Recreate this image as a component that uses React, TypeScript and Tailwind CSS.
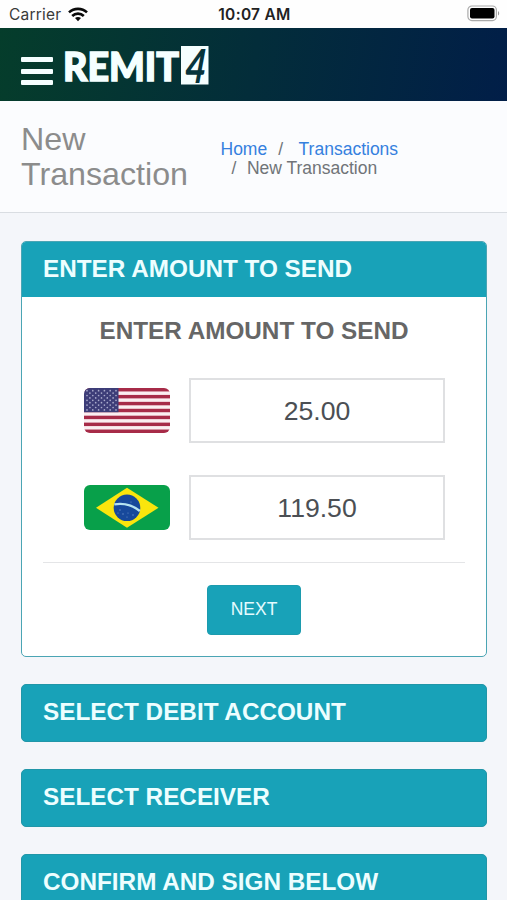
import React from "react";

const headingClass = "text-[24.3px] leading-[30px] font-bold";

function StatusBar() {
  return (
    <div className="grid h-7 shrink-0 grid-cols-3 items-center bg-[#fefefe] pt-px pr-[7px] pl-[9px] font-['Inter',sans-serif] text-[#222]">
      <div className="flex items-center gap-[7px]">
        <span className="text-[15.5px] leading-[20px] tracking-[0.2px] text-[#3a3a3a]">Carrier</span>
        <svg width="20" height="15" viewBox="0 0 20 15" fill="none" stroke="#0a0a0a" strokeWidth="2.6">
          <path d="M1 5.4C6 .7 14 .7 19 5.4" />
          <path d="M4.2 9C7.5 5.8 12.5 5.8 15.8 9" />
          <path d="M10 14.2l-3-3.1c1.7-1.5 4.3-1.5 6 0z" fill="#0a0a0a" stroke="none" />
        </svg>
      </div>
      <div className="text-center text-[15.5px] leading-[20px] font-semibold tracking-[0.3px] whitespace-nowrap">
        10:07 AM
      </div>
      <svg className="mb-[2px] justify-self-end" width="33" height="17" viewBox="0 0 33 17">
        <rect x=".9" y="1" width="28.5" height="14.6" rx="4" fill="none" stroke="#aaa" strokeWidth="1.2" />
        <rect x="3" y="3" width="24.5" height="10.6" rx="2" fill="#000" />
        <path d="M31 6c1.6.8 1.6 3.8 0 4.6z" fill="#999" />
      </svg>
    </div>
  );
}

function Logo() {
  return (
    <svg width="150" height="68" viewBox="0 -12 150 68" role="img" aria-label="Remit4">
      <text
        x="1"
        y="39.3"
        fontFamily="Lato, 'Open Sans', sans-serif"
        fontWeight="900"
        fontSize="40"
        fill="#f5ffff"
        stroke="#f5ffff"
        strokeWidth="1.5"
        textLength="116"
        lengthAdjust="spacingAndGlyphs"
      >
        REMIT
      </text>
      <rect x="119" y="4" width="27.5" height="38.5" fill="#f5ffff" />
      <text
        x="0"
        y="0"
        transform="translate(122 40.5) skewX(-5) scale(.78 1)"
        fontFamily="Lato, 'Open Sans', sans-serif"
        fontWeight="700"
        fontStyle="italic"
        fontSize="47"
        fill="#06343c"
      >
        4
      </text>
    </svg>
  );
}

function TopBar() {
  return (
    <header className="flex h-[73px] shrink-0 items-start bg-linear-[100deg] from-[#053d2b] via-[#032d3a] via-50% to-[#011e48] pl-[21px]">
      <div className="mt-[29px] flex w-8 flex-col gap-[6.5px]">
        <span className="h-[5px] rounded-[1px] bg-[#f5ffff]" />
        <span className="h-[5px] rounded-[1px] bg-[#f5ffff]" />
        <span className="h-[5px] rounded-[1px] bg-[#f5ffff]" />
      </div>
      <div className="mt-[2px] ml-[9px]">
        <Logo />
      </div>
    </header>
  );
}

function PageHeading() {
  return (
    <section className="flex h-[112px] shrink-0 border-b border-[#d9dde2] bg-[#fbfcfe] pl-[21px]">
      <h1 className="w-[199.5px] pt-[21px] text-[32.2px] leading-[35px] text-[#8c8c8c]">
        New
        <br />
        Transaction
      </h1>
      <nav className="pt-[38.5px] text-[17.5px] leading-[19px] text-[#707478]">
        <div className="flex">
          <a className="text-[#3580de]">Home</a>
          <span className="ml-[11px]">/</span>
          <a className="ml-[15.5px] text-[#3580de]">Transactions</a>
        </div>
        <div className="flex pl-[11px]">
          <span>/</span>
          <span className="ml-[10.5px]">New Transaction</span>
        </div>
      </nav>
    </section>
  );
}

function UsaFlag() {
  const stars = [];
  for (let row = 0; row < 9; row++) {
    const count = row % 2 ? 5 : 6;
    for (let i = 0; i < count; i++) {
      stars.push(<circle key={`${row}-${i}`} cx={3 + i * 5.8 + (row % 2 ? 2.9 : 0)} cy={2.7 + row * 2.4} r="0.85" />);
    }
  }
  return (
    <svg width="86" height="45" viewBox="0 0 86 45" className="rounded-[6px]">
      <rect width="86" height="45" fill="#fbeef1" />
      {[0, 1, 2, 3, 4, 5, 6].map((n) => (
        <rect key={n} y={n * 6.923} width="86" height="3.46" fill="#a72b48" />
      ))}
      <rect width="34.5" height="24.2" fill="#3d3d78" />
      <g fill="#a9aacb">{stars}</g>
    </svg>
  );
}

function BrazilFlag() {
  return (
    <svg width="86" height="45" viewBox="0 0 86 45" className="rounded-[6px]">
      <rect width="86" height="45" fill="#08a04a" />
      <path d="M12 22.8 43 2.8 74.5 22.8 43 42.8z" fill="#fae50d" />
      <circle cx="43" cy="22.8" r="13.3" fill="#17499b" />
      <path d="M30.3 19.4c9-1.5 18.5 1 25.5 6.6" fill="none" stroke="#b5e3f0" strokeWidth="2.4" />
      <g fill="#6c93cc">
        <circle cx="36" cy="25" r=".7" />
        <circle cx="34" cy="28" r=".6" />
        <circle cx="39" cy="29" r=".7" />
        <circle cx="44" cy="28" r=".6" />
        <circle cx="43" cy="32" r=".6" />
        <circle cx="49" cy="30" r=".7" />
        <circle cx="47" cy="17" r=".6" />
      </g>
    </svg>
  );
}

function AmountRow({ flag, value }: { flag: React.ReactNode; value: string }) {
  return (
    <div className="flex items-center gap-[19px] pl-[62px]">
      {flag}
      <input
        readOnly
        value={value}
        className="h-[65px] w-[256px] border-2 border-[#dfe0e2] bg-white pt-[2px] text-center text-[26.6px] text-[#4b4f54] outline-none"
      />
    </div>
  );
}

function Step({ title }: { title: string }) {
  return (
    <section className="mb-[27px] h-[58px] shrink-0 rounded-[5px] border border-[#2196a8] bg-[#18a2b8] px-[21px] pt-[12px] text-[#edfeff]">
      <h2 className={headingClass}>{title}</h2>
    </section>
  );
}

export default function App() {
  return (
    <div className="flex h-[900px] w-full flex-col overflow-hidden bg-[#f4f6fa] font-['Liberation_Sans',Arial,sans-serif]">
      <StatusBar />
      <TopBar />
      <PageHeading />
      <main className="flex shrink-0 flex-col pt-[27.5px] pr-[20px] pl-[21px]">
        <section className="mb-[27px] h-[416px] shrink-0 overflow-hidden rounded-[5px] border-[1.5px] border-[#4ba5b4] bg-white">
          <div className="h-[55px] bg-[#18a2b8] px-[21px] pt-[12px] text-[#edfeff]">
            <h2 className={headingClass}>ENTER AMOUNT TO SEND</h2>
          </div>
          <h3 className="pt-[19px] text-center text-[24.3px] leading-[30px] font-bold text-[#666]">ENTER AMOUNT TO SEND</h3>
          <div className="mt-[32px] flex flex-col gap-[32px]">
            <AmountRow flag={<UsaFlag />} value="25.00" />
            <AmountRow flag={<BrazilFlag />} value="119.50" />
          </div>
          <div className="mx-[21px] mt-[22px] border-t border-[#e4e5e7]" />
          <div className="mt-[22px] flex justify-center">
            <button className="h-[50px] w-[94px] rounded-[4px] border border-[#1c9bae] bg-[#18a2b8] text-[17.5px] text-[#e4fbff]">
              NEXT
            </button>
          </div>
        </section>
        <Step title="SELECT DEBIT ACCOUNT" />
        <Step title="SELECT RECEIVER" />
        <Step title="CONFIRM AND SIGN BELOW" />
      </main>
    </div>
  );
}
